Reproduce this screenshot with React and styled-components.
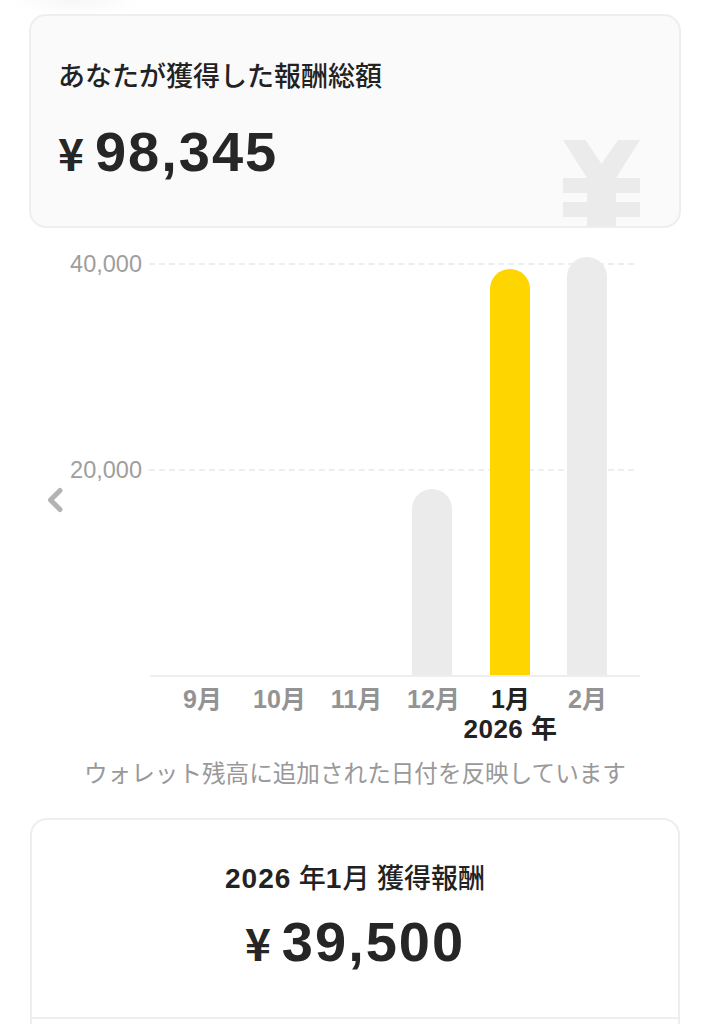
import styled, { createGlobalStyle } from "styled-components";

const GlobalStyle = createGlobalStyle`
  html, body {
    margin: 0;
    background: #fff;
    font-family: "Liberation Sans", "Noto Sans CJK JP", sans-serif;
  }
`;

const MONTHS = [
  { label: "9月", value: 0 },
  { label: "10月", value: 0 },
  { label: "11月", value: 0 },
  { label: "12月", value: 186 },
  { label: "1月", value: 406, active: true, year: "2026 年" },
  { label: "2月", value: 418 },
];

function App() {
  return (
    <Page>
      <GlobalStyle />
      <SummaryCard>
        <SummaryTitle>あなたが獲得した報酬総額</SummaryTitle>
        <Amount>
          <Yen>¥</Yen>
          <Digits>98,345</Digits>
        </Amount>
        <Watermark aria-hidden="true">
          <svg width="77" height="86" viewBox="0 0 77 86">
            <path
              d="M0 0H22.5L38.5 24L55 0H77L53 38H77V53H53V62H77V77H53V86H24V77H0V62H24V53H0V38H24Z"
              fill="#ebebeb"
            />
          </svg>
        </Watermark>
      </SummaryCard>

      <ChartSection>
        <PrevButton aria-label="前へ">
          <svg width="18" height="26" viewBox="0 0 18 26">
            <path
              d="M14 3.5L4.5 13L14 22.5"
              fill="none"
              stroke="#b3b3b3"
              strokeWidth="5"
              strokeLinecap="round"
              strokeLinejoin="round"
            />
          </svg>
        </PrevButton>
        <Plot>
          <GridLine $top={36}>
            <GridLabel>40,000</GridLabel>
            <Dash />
          </GridLine>
          <GridLine $top={242}>
            <GridLabel>20,000</GridLabel>
            <Dash />
          </GridLine>
          <Bars>
            {MONTHS.map((m) => (
              <BarSlot key={m.label}>
                {m.value > 0 && <Bar $active={m.active} style={{ height: m.value }} />}
              </BarSlot>
            ))}
          </Bars>
        </Plot>
        <Labels>
          {MONTHS.map((m) => (
            <MonthCell key={m.label}>
              <MonthLabel $active={m.active}>{m.label}</MonthLabel>
              {m.year && <YearLabel>{m.year}</YearLabel>}
            </MonthCell>
          ))}
        </Labels>
        <Note>ウォレット残高に追加された日付を反映しています</Note>
      </ChartSection>

      <DetailCard>
        <DetailHead>
          <DetailTitle>
            <b>2026</b> 年<b>1</b>月 獲得報酬
          </DetailTitle>
          <Amount $center>
            <Yen>¥</Yen>
            <Digits>39,500</Digits>
          </Amount>
        </DetailHead>
        <DetailRow />
      </DetailCard>
    </Page>
  );
}

export default App;

const Page = styled.div`
  position: relative;
  width: 710px;
  height: 1024px;
  overflow: hidden;
  box-sizing: border-box;
  padding: 14px 29px 0;
  background: #fff;

  /* faint smudge along the top edge */
  &::before {
    content: "";
    position: absolute;
    top: -14px;
    left: 10px;
    width: 130px;
    height: 30px;
    background: radial-gradient(ellipse at center, #f7f7f7 0%, #ffffff 70%);
  }
`;

const SummaryCard = styled.section`
  position: relative;
  height: 214px;
  box-sizing: border-box;
  padding: 44px 27px 0;
  background: #fafafa;
  border: 2px solid #eeeeee;
  border-radius: 17px;
  overflow: hidden;
`;

const SummaryTitle = styled.h2`
  margin: 0;
  font-size: 27px;
  line-height: 34px;
  font-weight: 500;
  color: #222;
`;

const Amount = styled.div`
  display: flex;
  align-items: baseline;
  justify-content: ${(p) => (p.$center ? "center" : "flex-start")};
  gap: 11px;
  margin-top: ${(p) => (p.$center ? "3px" : "27px")};
  color: #262626;
`;

const Yen = styled.span`
  font-size: 44px;
  line-height: 44px;
  font-weight: 700;
  font-family: "Noto Sans CJK JP", sans-serif;
`;

const Digits = styled.span`
  font-size: 56px;
  line-height: 62px;
  font-weight: 700;
  letter-spacing: 2px;
`;

const Watermark = styled.div`
  position: absolute;
  right: 39px;
  bottom: 0;
  line-height: 0;
`;

const ChartSection = styled.section`
  position: relative;
`;

const PrevButton = styled.div`
  position: absolute;
  left: 17px;
  top: 259px;
  line-height: 0;
`;

const Plot = styled.div`
  position: relative;
  height: 449px;
  margin-left: 121px;
  width: 490px;
  box-sizing: border-box;
  border-bottom: 2px solid #eeeeee;
`;

const GridLine = styled.div`
  position: absolute;
  top: ${(p) => p.$top}px;
  left: -80px;
  right: 6px;
  display: flex;
  align-items: center;
  gap: 7px;
  transform: translateY(-50%);
`;

const GridLabel = styled.span`
  font-size: 23.5px;
  line-height: 24px;
  width: 72px;
  text-align: right;
  color: #9e9e9e;
`;

const Dash = styled.div`
  flex: 1;
  height: 0;
  border-top: 2px dashed #eeeeee;
`;

const Bars = styled.div`
  position: relative;
  display: grid;
  grid-template-columns: repeat(6, 77.5px);
  height: 100%;
  padding: 0 11px;
  box-sizing: border-box;
  align-items: end;
`;

const BarSlot = styled.div`
  display: flex;
  justify-content: center;
`;

const Bar = styled.div`
  width: 40px;
  border-radius: 20px 20px 0 0;
  background: ${(p) => (p.$active ? "#ffd500" : "#ebebeb")};
`;

const Labels = styled.div`
  display: grid;
  grid-template-columns: repeat(6, 77px);
  margin-left: 135px;
  padding-top: 8px;
`;

const MonthCell = styled.div`
  display: flex;
  flex-direction: column;
  align-items: center;
  white-space: nowrap;
`;

const MonthLabel = styled.span`
  font-size: 25px;
  line-height: 28px;
  font-weight: 700;
  color: ${(p) => (p.$active ? "#222" : "#939393")};
`;

const YearLabel = styled.span`
  font-size: 26px;
  line-height: 32px;
  font-weight: 700;
  letter-spacing: 0.5px;
  color: #222;
`;

const Note = styled.p`
  margin: 12px 0 0;
  font-size: 23.6px;
  line-height: 34px;
  text-align: center;
  color: #999;
`;

const DetailCard = styled.section`
  margin: 27px 1px 0;
  height: 260px;
  box-sizing: border-box;
  border: 2px solid #eeeeee;
  border-radius: 17px;
`;

const DetailHead = styled.div`
  height: 197px;
  box-sizing: border-box;
  padding-top: 42px;
  display: flex;
  flex-direction: column;
  align-items: center;
`;

const DetailTitle = styled.h3`
  margin: 0 0 12px;
  font-size: 27px;
  line-height: 34px;
  font-weight: 500;
  color: #222;

  b {
    font-size: 28px;
    letter-spacing: 1px;
  }
`;

const DetailRow = styled.div`
  border-top: 2px solid #eeeeee;
`;
